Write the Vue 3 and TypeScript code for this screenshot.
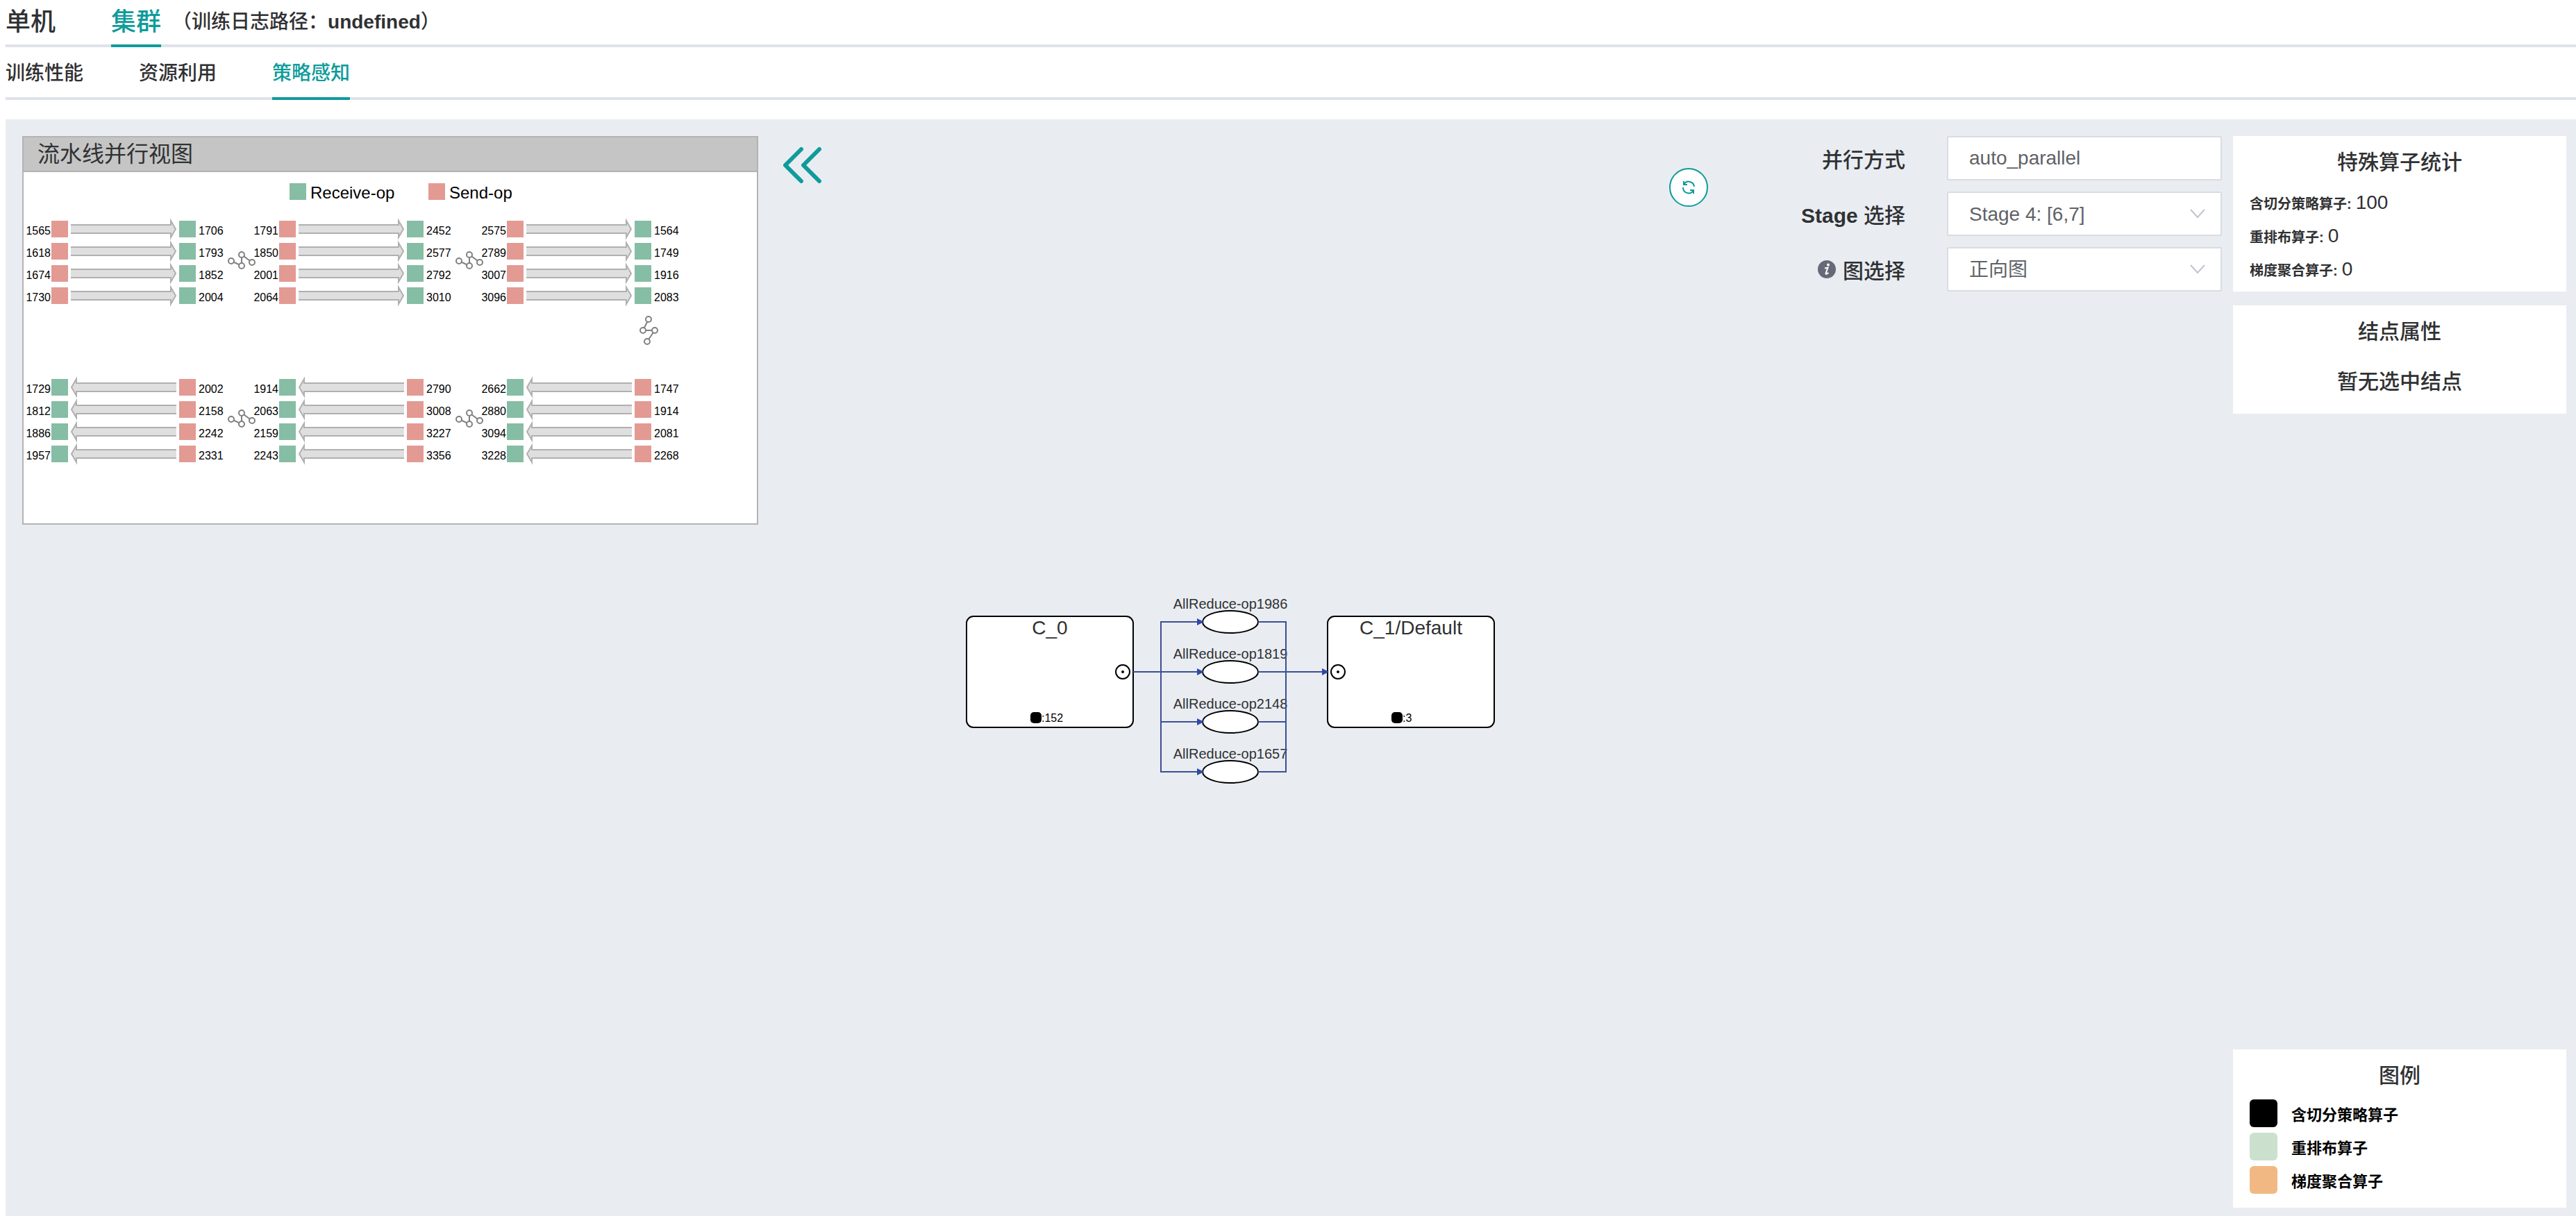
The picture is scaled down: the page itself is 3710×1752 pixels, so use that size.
<script setup lang="ts">
import { ref } from 'vue'

type Flow = 'forward' | 'backward'

interface OpRow {
  left: string
  right: string
}

interface StageGroup {
  x: number
  y: number
  flow: Flow
  rows: OpRow[]
}

const clusterTabs = ['单机', '集群']
const activeCluster = ref('集群')

const viewTabs = ['训练性能', '资源利用', '策略感知']
const activeView = ref('策略感知')

const parallelMode = ref('auto_parallel')
const stage = ref('Stage 4: [6,7]')
const graph = ref('正向图')

const GROUP_PITCH = 328
const ROW_PITCH = 32

function makeGroup(col: number, y: number, flow: Flow, left: string[], right: string[]): StageGroup {
  return {
    x: 40 + col * GROUP_PITCH,
    y,
    flow,
    rows: left.map((value, i) => ({ left: value, right: right[i] })),
  }
}

const groups: StageGroup[] = [
  makeGroup(0, 70, 'forward', ['1565', '1618', '1674', '1730'], ['1706', '1793', '1852', '2004']),
  makeGroup(1, 70, 'forward', ['1791', '1850', '2001', '2064'], ['2452', '2577', '2792', '3010']),
  makeGroup(2, 70, 'forward', ['2575', '2789', '3007', '3096'], ['1564', '1749', '1916', '2083']),
  makeGroup(0, 298, 'backward', ['1729', '1812', '1886', '1957'], ['2002', '2158', '2242', '2331']),
  makeGroup(1, 298, 'backward', ['1914', '2063', '2159', '2243'], ['2790', '3008', '3227', '3356']),
  makeGroup(2, 298, 'backward', ['2662', '2880', '3094', '3228'], ['1747', '1914', '2081', '2268']),
]

const links = [
  { x: 294, y: 114 },
  { x: 294 + GROUP_PITCH, y: 114 },
  { x: 294, y: 342 },
  { x: 294 + GROUP_PITCH, y: 342 },
]

const arrowPath: Record<Flow, string> = {
  forward: 'M28 6H172V0L179 12L172 24V18H28',
  backward: 'M180 6H36V0L29 12L36 24V18H180',
}

const nodes = [
  { name: 'C_0', x: 2, port: 227, count: 152 },
  { name: 'C_1/Default', x: 522, port: 537, count: 3 },
]

const allReduceOps = [
  { name: 'AllReduce-op1986', y: 78 },
  { name: 'AllReduce-op1819', y: 150 },
  { name: 'AllReduce-op2148', y: 222 },
  { name: 'AllReduce-op1657', y: 294 },
]

const stats = [
  { label: '含切分策略算子', value: 100 },
  { label: '重排布算子', value: 0 },
  { label: '梯度聚合算子', value: 0 },
]

const legend = [
  { label: '含切分策略算子', tone: 'black' },
  { label: '重排布算子', tone: 'green' },
  { label: '梯度聚合算子', tone: 'orange' },
]
</script>

<template>
  <div class="page">
    <nav class="tabs tabs-main">
      <button
        v-for="tab in clusterTabs"
        :key="tab"
        type="button"
        class="tab"
        :class="{ active: tab === activeCluster }"
        @click="activeCluster = tab"
      >
        {{ tab }}
      </button>
      <span class="log-path">（训练日志路径：<b>undefined</b>）</span>
    </nav>
    <nav class="tabs tabs-sub">
      <button
        v-for="tab in viewTabs"
        :key="tab"
        type="button"
        class="tab"
        :class="{ active: tab === activeView }"
        @click="activeView = tab"
      >
        {{ tab }}
      </button>
    </nav>

    <main class="board">
      <div class="canvas">
        <svg width="764" height="376" viewBox="0 0 764 376">
          <g v-for="node in nodes" :key="node.name">
            <rect class="node-box" :x="node.x" y="108" width="240" height="160" rx="10" />
            <text class="node-name" :x="node.x + 120" y="134">{{ node.name }}</text>
            <circle class="port" :cx="node.port" cy="188" r="10" />
            <circle :cx="node.port" cy="188" r="2" />
            <rect :x="node.x + 92" y="246" width="16" height="16" rx="5" />
            <text class="node-count" :x="node.x + 108" y="260">:{{ node.count }}</text>
          </g>
          <g transform="translate(0 38)">
            <g v-for="op in allReduceOps" :key="op.name">
              <text class="op-name" x="382" :y="op.y - 19">{{ op.name }}</text>
              <ellipse class="op" cx="382" :cy="op.y" rx="40" ry="16" />
              <path class="edge" :d="`M282 ${op.y}H334M422 ${op.y}H462`" />
              <path class="edge-head" :d="`M334 ${op.y - 5}L344 ${op.y}L334 ${op.y + 5}Z`" />
            </g>
            <path class="edge" d="M242 150H282M282 77V295M462 77V295M462 150H514" />
            <path class="edge-head" d="M514 145L524 150L514 155Z" />
          </g>
        </svg>
      </div>

      <div class="overlay">
        <section class="pipeline">
          <h2 class="pipeline-title">流水线并行视图</h2>
          <svg class="pipeline-view" viewBox="0 0 1056 506">
            <rect class="receive" x="383" y="16" width="24" height="24" />
            <text class="key" x="413" y="38">Receive-op</text>
            <rect class="send" x="583" y="16" width="24" height="24" />
            <text class="key" x="613" y="38">Send-op</text>

            <g v-for="(group, g) in groups" :key="g" :transform="`translate(${group.x} ${group.y})`">
              <g v-for="(row, r) in group.rows" :key="r" :transform="`translate(0 ${r * ROW_PITCH})`">
                <text class="num end" x="-1" y="20">{{ row.left }}</text>
                <rect :class="group.flow === 'forward' ? 'send' : 'receive'" width="24" height="24" />
                <path class="arrow" :d="arrowPath[group.flow]" />
                <rect :class="group.flow === 'forward' ? 'receive' : 'send'" x="184" width="24" height="24" />
                <text class="num" x="212" y="20">{{ row.right }}</text>
              </g>
            </g>

            <g v-for="(link, i) in links" :key="i" class="link" :transform="`translate(${link.x} ${link.y})`">
              <path d="M5 14L20 21V5L35 16" />
              <circle cx="5" cy="14" r="4" />
              <circle cx="20" cy="5" r="4" />
              <circle cx="20" cy="21" r="4" />
              <circle cx="35" cy="16" r="4" />
            </g>
            <g class="link" transform="translate(888 208)">
              <path d="M12 4L4 20H21L10 36" />
              <circle cx="12" cy="4" r="4" />
              <circle cx="4" cy="20" r="4" />
              <circle cx="21" cy="20" r="4" />
              <circle cx="10" cy="36" r="4" />
            </g>
          </svg>
        </section>

        <button type="button" class="collapse" aria-label="收起">
          <svg width="56" height="52" viewBox="0 0 56 52">
            <path d="M26 3L3 26L26 49M52 3L29 26L52 49" />
          </svg>
        </button>

        <button type="button" class="refresh" aria-label="刷新">
          <svg width="20" height="20" viewBox="0 0 20 20">
            <path d="M18 9A8 8 0 0 0 3.500 5M3 1V6H8M2 10A8 8 0 0 0 16.500 15M17 19V14H12" />
          </svg>
        </button>

        <form class="controls" @submit.prevent>
          <label for="mode">并行方式</label>
          <input id="mode" v-model="parallelMode" class="field" type="text" readonly />

          <label for="stage"><span><b>Stage</b> 选择</span></label>
          <div class="select">
            <select id="stage" v-model="stage" class="field">
              <option>Stage 4: [6,7]</option>
            </select>
            <svg class="chevron" width="22" height="14" viewBox="0 0 22 14"><path d="M1 1L11 12L21 1" /></svg>
          </div>

          <label for="graph">
            <svg class="info" width="26" height="26" viewBox="0 0 26 26">
              <circle cx="13" cy="13" r="13" />
              <circle class="mark" cx="15" cy="6.500" r="2" />
              <path class="stroke" d="M10 11.500L14.500 10.500L11.500 19Q11.500 21 15.500 18" />
            </svg>
            图选择
          </label>
          <div class="select">
            <select id="graph" v-model="graph" class="field">
              <option>正向图</option>
            </select>
            <svg class="chevron" width="22" height="14" viewBox="0 0 22 14"><path d="M1 1L11 12L21 1" /></svg>
          </div>
        </form>

        <aside class="side">
          <section class="card">
            <h3>特殊算子统计</h3>
            <p v-for="item in stats" :key="item.label" class="stat">
              <span class="stat-label">{{ item.label }}:</span>
              <span>{{ item.value }}</span>
            </p>
          </section>
          <section class="card card-node">
            <h3>结点属性</h3>
            <p class="empty">暂无选中结点</p>
          </section>
          <section class="card card-legend">
            <h3>图例</h3>
            <ul>
              <li v-for="item in legend" :key="item.label">
                <i class="swatch" :class="item.tone"></i>{{ item.label }}
              </li>
            </ul>
          </section>
        </aside>
      </div>
    </main>
  </div>
</template>

<style>
body {
  margin: 0;
  background: #fff;
}
</style>

<style scoped>
.page {
  box-sizing: border-box;
  display: flex;
  flex-direction: column;
  min-height: 100vh;
  padding-left: 8px;
  color: #303133;
  font-family: "Liberation Sans", "Noto Sans CJK SC", sans-serif;
  font-size: 28px;
}

h2,
h3,
p,
ul {
  margin: 0;
  padding: 0;
}

button,
input,
select {
  margin: 0;
  font: inherit;
  color: inherit;
}

.tabs {
  display: flex;
  gap: 80px;
  box-shadow: inset 0 -4px #dfe2e9;
}

.tab {
  padding: 0;
  border: 0;
  border-bottom: 4px solid transparent;
  background: none;
  font-weight: 500;
  cursor: pointer;
}

.tab.active {
  border-color: #0f9b9b;
  color: #0f9b9b;
}

.tabs-main .tab {
  height: 68px;
  padding-bottom: 8px;
  font-size: 36px;
}

.tabs-sub .tab {
  height: 76px;
  padding-bottom: 2px;
}

.log-path {
  margin-left: -64px;
  font-weight: 500;
  line-height: 64px;
}

.board {
  flex: 1;
  display: grid;
  margin-top: 28px;
  background: #e9edf2;
}

.canvas,
.overlay {
  grid-area: 1 / 1;
}

.canvas {
  display: grid;
  place-items: center;
  padding: 12px 174px 0 0;
}

.node-box,
.port,
.op {
  fill: #fff;
  stroke: #000;
  stroke-width: 2;
}

.node-name,
.op-name {
  fill: #303133;
  text-anchor: middle;
}

.op-name {
  font-size: 20px;
}

.node-count {
  font-size: 16px;
}

.edge {
  fill: none;
  stroke: #3b4f93;
  stroke-width: 2;
}

.edge-head {
  fill: #3149a6;
}

.overlay {
  display: flex;
  align-items: flex-start;
  padding: 24px 14px 12px 24px;
}

.pipeline {
  flex: none;
  width: 1056px;
  border: 2px solid #b3b3b3;
  background: #fff;
}

.pipeline-title {
  padding-left: 20px;
  border-bottom: 2px solid #b3b3b3;
  background: #c5c5c5;
  font-size: 32px;
  font-weight: 400;
  line-height: 48px;
}

.pipeline-view {
  display: block;
  width: 100%;
}

.receive {
  fill: #86bda5;
}

.send {
  fill: #e39a93;
}

.key {
  font-size: 24px;
}

.num {
  font-size: 16px;
}

.end {
  text-anchor: end;
}

.arrow {
  fill: #dfdfdf;
  stroke: #b0b0b0;
  stroke-width: 2;
}

.link {
  fill: #fff;
  stroke: #808080;
  stroke-width: 2;
}

.link path {
  fill: none;
}

.collapse {
  margin: 16px auto 0 36px;
  padding: 0;
  border: 0;
  background: none;
  cursor: pointer;
}

.collapse svg,
.refresh svg {
  display: block;
  fill: none;
  stroke: #0f9b9b;
  stroke-width: 2;
}

.collapse svg {
  stroke-width: 6;
  stroke-linecap: round;
  stroke-linejoin: round;
}

.refresh {
  display: grid;
  place-items: center;
  width: 56px;
  height: 56px;
  margin: 46px 124px 0 0;
  padding: 0;
  border: 2px solid #0f9b9b;
  border-radius: 50%;
  background: #fff;
  cursor: pointer;
}

.controls {
  display: grid;
  grid-template-columns: 160px 396px;
  gap: 16px 60px;
  align-items: center;
  margin-right: 16px;
}

.controls label {
  display: flex;
  align-items: center;
  justify-content: flex-end;
  gap: 10px;
  font-size: 30px;
  font-weight: 500;
  white-space: nowrap;
}

.field {
  box-sizing: border-box;
  width: 100%;
  height: 64px;
  padding: 0 30px;
  border: 2px solid #d9dce2;
  border-radius: 2px;
  outline: 0;
  background: #fff;
  color: #606266;
  appearance: none;
}

.select {
  display: grid;
  align-items: center;
}

.select > * {
  grid-area: 1 / 1;
}

.chevron {
  justify-self: end;
  margin-right: 24px;
  fill: none;
  stroke: #c0c4cc;
  stroke-width: 2;
  pointer-events: none;
}

.info {
  fill: #666a78;
}

.info .mark {
  fill: #fff;
}

.info .stroke {
  fill: none;
  stroke: #fff;
  stroke-width: 2;
}

.side {
  display: flex;
  flex-direction: column;
  align-self: stretch;
  gap: 20px;
  width: 480px;
}

.card {
  box-sizing: border-box;
  padding: 16px 24px;
  background: #fff;
}

.card h3 {
  font-size: 30px;
  font-weight: 500;
  line-height: 44px;
  text-align: center;
}

.card:first-child {
  padding-bottom: 8px;
}

.card:first-child h3 {
  margin-bottom: 12px;
}

.stat {
  display: flex;
  align-items: baseline;
  gap: 6px;
  height: 48px;
  line-height: 48px;
}

.stat-label {
  font-size: 20px;
  font-weight: 700;
}

.card-node {
  padding-bottom: 24px;
}

.empty {
  padding: 28px 0 0;
  font-size: 30px;
  font-weight: 500;
  line-height: 44px;
  text-align: center;
}

.card-legend {
  margin-top: auto;
}

.card-legend h3 {
  margin-bottom: 8px;
}

.card-legend li {
  display: flex;
  align-items: center;
  gap: 20px;
  height: 48px;
  color: #000;
  font-size: 22px;
  font-weight: 700;
  list-style: none;
}

.swatch {
  width: 40px;
  height: 40px;
  border-radius: 6px;
}

.black {
  background: #000;
}

.green {
  background: #cbe1cd;
}

.orange {
  background: #f2b884;
}
</style>
